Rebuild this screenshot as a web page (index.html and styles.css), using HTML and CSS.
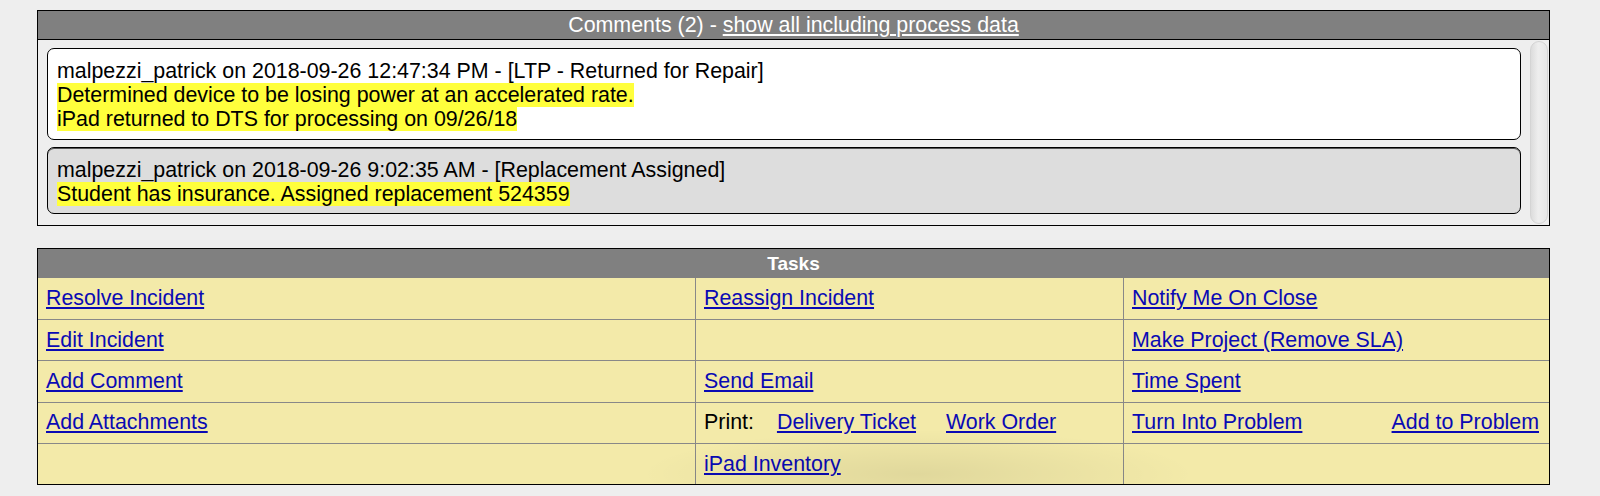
FILE: index.html
```html
<!DOCTYPE html>
<html lang="en">
<head>
<meta charset="utf-8">
<title>Incident</title>
<link rel="stylesheet" href="styles.css">
</head>
<body>
<div class="page">
  <section class="panel comments">
    <div class="panel-head comments-head">Comments (2) - <a class="head-link" href="#">show all including process data</a></div>
    <div class="comments-body">
      <div class="comment-list">
        <div class="comment comment-new">
          <div class="comment-meta">malpezzi_patrick on 2018-09-26 12:47:34 PM - [LTP - Returned for Repair]</div>
          <div class="comment-text"><mark class="hl">Determined device to be losing power at an accelerated rate.</mark><br><mark class="hl">iPad returned to DTS for processing on 09/26/18</mark></div>
        </div>
        <div class="comment comment-old">
          <div class="comment-meta">malpezzi_patrick on 2018-09-26 9:02:35 AM - [Replacement Assigned]</div>
          <div class="comment-text"><mark class="hl">Student has insurance. Assigned replacement 524359</mark></div>
        </div>
      </div>
      <div class="scrollbar"></div>
    </div>
  </section>

  <section class="panel tasks">
    <div class="panel-head tasks-head">Tasks</div>
    <div class="task-grid">
      <div class="cell"><a href="#">Resolve Incident</a></div>
      <div class="cell"><a href="#">Reassign Incident</a></div>
      <div class="cell"><a href="#">Notify Me On Close</a></div>

      <div class="cell"><a href="#">Edit Incident</a></div>
      <div class="cell"></div>
      <div class="cell"><a href="#">Make Project (Remove SLA)</a></div>

      <div class="cell"><a href="#">Add Comment</a></div>
      <div class="cell"><a href="#">Send Email</a></div>
      <div class="cell"><a href="#">Time Spent</a></div>

      <div class="cell"><a href="#">Add Attachments</a></div>
      <div class="cell print-cell"><span class="print-label">Print:</span><a class="print-link" href="#">Delivery Ticket</a><a class="print-link wo" href="#">Work Order</a></div>
      <div class="cell split-cell"><a href="#">Turn Into Problem</a><a href="#">Add to Problem</a></div>

      <div class="cell"></div>
      <div class="cell"><a href="#">iPad Inventory</a></div>
      <div class="cell"></div>
    </div>
    <div class="shade"></div>
  </section>
</div>
</body>
</html>
```

FILE: styles.css
```css
html, body {
  margin: 0;
  padding: 0;
  background: #eeeeee;
}

body {
  font-family: "Liberation Sans", Arial, Helvetica, sans-serif;
  font-size: 21.4px;
  color: #000;
  overflow: hidden;
}

.page {
  padding: 10px 50px 0 37px;
  display: flex;
  flex-direction: column;
  gap: 22px;
}

.panel {
  border: 1px solid #000;
  position: relative;
}

.panel-head {
  background: #808080;
  color: #fff;
  text-align: center;
}

.comments-head {
  height: 28px;
  line-height: 28px;
  border-bottom: 1px solid #000;
}

.head-link {
  color: #fff;
}

.comments-body {
  display: flex;
  align-items: stretch;
  padding: 0 1px 0 9px;
  gap: 9px;
  background: #eeeeee;
}

.comment-list {
  flex: 1;
  display: flex;
  flex-direction: column;
  gap: 7.5px;
  padding: 8px 0 10.5px;
}

.comment {
  border: 1px solid #000;
  border-radius: 7px;
  line-height: 24px;
}

.comment-new {
  background: #ffffff;
  padding: 10px 9px 7.5px;
}

.comment-old {
  background: #dddddd;
  box-shadow: inset 0 1px 0 #555;
  padding: 10px 9px 7px;
}

.hl {
  background: #ffff3c;
  color: #000;
}

.scrollbar {
  width: 16px;
  border: 1px solid #d4d4d4;
  border-radius: 9px;
  background: linear-gradient(to right, #dcdcdc, #eeeeee 45%, #e6e6e6);
  margin: 1px 0;
}

.tasks-head {
  height: 29px;
  line-height: 29px;
  font-size: 19px;
  font-weight: bold;
}

.task-grid {
  display: grid;
  grid-template-columns: 657px 428px 1fr;
  grid-auto-rows: 41.4px;
  background: #f3eaa9;
}

.cell {
  box-sizing: border-box;
  border-top: 1px solid #888;
  padding: 0 10px 0 8px;
  display: flex;
  align-items: center;
}

.task-grid .cell:nth-child(-n+3) {
  border-top: none;
}

.task-grid .cell:nth-child(3n+2),
.task-grid .cell:nth-child(3n) {
  border-left: 1px solid #888;
}

.cell a {
  color: #0a0ab4;
}

.print-label {
  margin-right: 23px;
}

.print-link.wo {
  margin-left: 30px;
}

.split-cell {
  justify-content: space-between;
}

.shade {
  position: absolute;
  left: 600px;
  width: 560px;
  top: 180px;
  height: 90px;
  background: radial-gradient(ellipse at center, rgba(0, 0, 0, 0.08), rgba(0, 0, 0, 0) 70%);
  pointer-events: none;
}
```
